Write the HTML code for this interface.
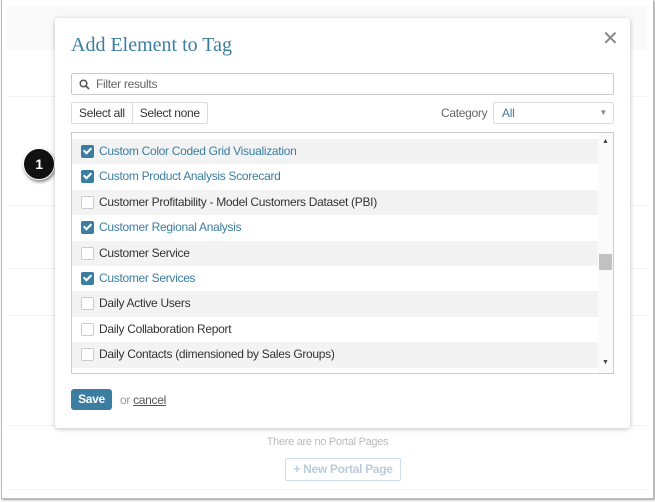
<!DOCTYPE html><html><head><style>
body{margin:0;width:655px;height:502px;background:#fff;font-family:"Liberation Sans",sans-serif;position:relative;overflow:hidden;letter-spacing:-0.3px}
.frame{position:absolute;left:1px;top:0;width:651px;height:498px;border:1px solid #bbb;border-top:none;background:#fff;box-shadow:1px 1px 2px #999}
.band{position:absolute;left:7px;width:640px;height:1px;background:#f3f3f3}
.modal{position:absolute;left:55px;top:18px;width:575px;height:410px;background:#fff;border-radius:3px;box-shadow:0 1px 5px rgba(0,0,0,.25)}
.title{position:absolute;left:16px;top:16px;font-family:"Liberation Serif",serif;font-size:20px;color:#3b7ea1;letter-spacing:0}
.x{position:absolute;left:547px;top:8px;font-size:20px;color:#888}
.filter{position:absolute;left:16px;top:55px;width:541px;height:20px;border:1px solid #ccc;border-radius:2px;font-size:12px;color:#666;line-height:20px}
.btns{position:absolute;left:16px;top:84px;height:20px;border:1px solid #ddd;border-radius:2px;font-size:12px;display:flex;line-height:20px;color:#333}
.btns span{padding:0 7px}
.cat{position:absolute;left:386px;top:88px;font-size:12px;color:#666}
.sel{position:absolute;left:438px;top:84px;width:119px;height:20px;border:1px solid #ddd;border-radius:2px;font-size:12px;color:#3b7ea1;line-height:20px}
.list{position:absolute;left:16px;top:114px;width:541px;height:240px;border:1px solid #ccc;overflow:hidden}
.row{position:absolute;left:0;width:526px;height:25.4px;font-size:12px;line-height:25px}
.row.g{background:#f3f3f3}
.cb{position:absolute;left:9px;top:6px;width:11px;height:11px;border:1px solid #ccc;border-radius:2px;background:#fff}
.cb.c{background:#3b7ea1;border-color:#3b7ea1}
.cb.c::after{content:"";position:absolute;left:3px;top:0px;width:3px;height:6px;border:solid #fff;border-width:0 2px 2px 0;transform:rotate(45deg)}
.row .t{position:absolute;left:27px;color:#333}
.row.ck .t{color:#3b7ea1}
.sb{position:absolute;left:526px;top:0;width:15px;height:240px;background:#fafafa}
.save{position:absolute;left:16px;top:371px;width:41px;height:21px;background:#3b7ea1;color:#fff;border-radius:3px;font-size:12px;font-weight:bold;text-align:center;line-height:21px}
</style></head><body>
<div class="frame"></div>
<div style="position:absolute;left:7px;top:6px;width:640px;height:44px;background:#f9f9f9"></div>
<div class="band" style="top:96px"></div><div class="band" style="top:205px"></div><div class="band" style="top:268px"></div><div class="band" style="top:315px"></div><div class="band" style="top:425px"></div><div class="band" style="top:489px"></div>
<div style="position:absolute;left:0;width:655px;top:436px;text-align:center;font-size:11px;color:#bbb">There are no Portal Pages</div>
<div style="position:absolute;left:285px;top:458px;width:114px;height:21px;border:1px solid #cde;border-radius:2px;font-size:12px;color:#bcd;font-weight:bold;text-align:center;line-height:21px">+ New Portal Page</div>
<div style="position:absolute;left:23px;top:148px;width:30px;height:30px;border-radius:50%;background:#111;border:1px solid #fff;box-shadow:1px 2px 3px rgba(0,0,0,.5);color:#fff;font-weight:bold;font-size:14px;text-align:center;line-height:30px">1</div>
<div class="modal">
<div class="title">Add Element to Tag</div>
<div class="x">✕</div>
<div class="filter"><svg style="position:absolute;left:7px;top:5px" width="11" height="11" viewBox="0 0 11 11"><circle cx="4.5" cy="4.5" r="3.3" fill="none" stroke="#555" stroke-width="1.5"/><path d="M7 7l3 3" stroke="#555" stroke-width="1.6"/></svg><span style="position:absolute;left:24px">Filter results</span></div>
<div class="btns"><span style="border-right:1px solid #ddd">Select all</span><span>Select none</span></div>
<div class="cat">Category</div>
<div class="sel"><span style="margin-left:8px">All</span><span style="position:absolute;right:6px;top:0;font-size:8px;color:#888">▼</span></div>
<div class="list">
<div class="row g ck" style="top:6px"><div class="cb c"></div><span class="t">Custom Color Coded Grid Visualization</span></div>
<div class="row ck" style="top:31.4px"><div class="cb c"></div><span class="t">Custom Product Analysis Scorecard</span></div>
<div class="row g" style="top:56.8px"><div class="cb"></div><span class="t">Customer Profitability - Model Customers Dataset (PBI)</span></div>
<div class="row ck" style="top:82.2px"><div class="cb c"></div><span class="t">Customer Regional Analysis</span></div>
<div class="row g" style="top:107.6px"><div class="cb"></div><span class="t">Customer Service</span></div>
<div class="row ck" style="top:133px"><div class="cb c"></div><span class="t">Customer Services</span></div>
<div class="row g" style="top:158.4px"><div class="cb"></div><span class="t">Daily Active Users</span></div>
<div class="row" style="top:183.8px"><div class="cb"></div><span class="t">Daily Collaboration Report</span></div>
<div class="row g" style="top:209.2px"><div class="cb"></div><span class="t">Daily Contacts (dimensioned by Sales Groups)</span></div>
<div class="sb"><div style="position:absolute;left:4px;top:5px;font-size:7px;color:#444">▲</div><div style="position:absolute;left:1px;top:121px;width:13px;height:16px;background:#c1c1c1"></div><div style="position:absolute;left:4px;top:226px;font-size:7px;color:#444">▼</div></div>
</div>
<div class="save">Save</div>
<div style="position:absolute;left:65px;top:375px;font-size:12px;color:#999">or <span style="color:#555;text-decoration:underline">cancel</span></div>
</div>
</body></html>
